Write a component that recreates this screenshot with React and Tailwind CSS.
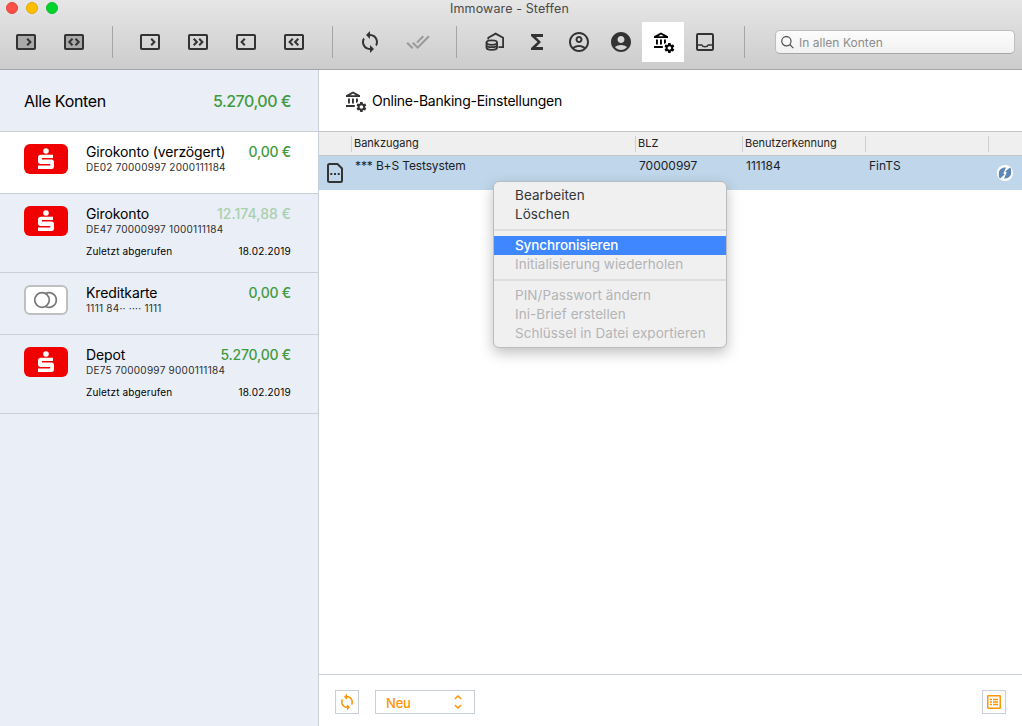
import React from 'react';
import { MdLoop, MdDoneAll, MdFunctions, MdOutlineAccountCircle, MdAccountCircle } from 'react-icons/md';

const accounts = [
  { name: 'Girokonto (verzögert)', number: 'DE02 70000997 2000111184', amount: '0,00 €', logo: 'sparkasse', active: true },
  { name: 'Girokonto', number: 'DE47 70000997 1000111184', amount: '12.174,88 €', logo: 'sparkasse', faded: true, date: '18.02.2019' },
  { name: 'Kreditkarte', number: '1111 84·· ···· 1111', amount: '0,00 €', logo: 'card' },
  { name: 'Depot', number: 'DE75 70000997 9000111184', amount: '5.270,00 €', logo: 'sparkasse', date: '18.02.2019' },
];

const menuGroups = [
  [{ label: 'Bearbeiten' }, { label: 'Löschen' }],
  [{ label: 'Synchronisieren', selected: true }, { label: 'Initialisierung wiederholen', disabled: true }],
  [
    { label: 'PIN/Passwort ändern', disabled: true },
    { label: 'Ini-Brief erstellen', disabled: true },
    { label: 'Schlüssel in Datei exportieren', disabled: true },
  ],
];

const chevrons = {
  right: 'M11.2 4.8L14.4 8l-3.2 3.2',
  both: 'M8.5 4.8L5.3 8l3.2 3.2M11.5 4.8L14.7 8l-3.2 3.2',
  doubleRight: 'M5.7 4.8L8.9 8l-3.2 3.2M11.2 4.8L14.4 8l-3.2 3.2',
  left: 'M8.8 4.8L5.6 8l3.2 3.2',
  doubleLeft: 'M8.8 4.8L5.6 8l3.2 3.2M14.3 4.8L11.1 8l3.2 3.2',
};

const BoxIcon = ({ d, fill = 'none' }) => (
  <svg width="20" height="16" viewBox="0 0 20 16" stroke="#333" strokeWidth="2">
    <rect x="1" y="1" width="18" height="14" rx="0.8" fill={fill} />
    <path d={d} fill="none" strokeWidth="2" />
  </svg>
);

const BankIcon = ({ color }) => (
  <svg width="22" height="22" viewBox="0 0 22 22" fill={color}>
    <path fillRule="evenodd" d="M8 0.5l7 3.8v1.7H1V4.3zM5.2 4.2h5.6L8 2.6z" />
    <path d="M3 7.5h1.9v5H3zM7 7.5h1.9v5H7zM11 7.5h1.9v3.6l-1.9 1zM1 14h8.8v1.9H1z" />
    <path transform="translate(10.4 9.9) scale(.5)" d="M19.43 12.98c.04-.32.07-.64.07-.98s-.03-.66-.07-.98l2.11-1.65c.19-.15.24-.42.12-.64l-2-3.46c-.12-.22-.39-.3-.61-.22l-2.49 1c-.52-.4-1.08-.73-1.69-.98l-.38-2.65C14.46 2.18 14.25 2 14 2h-4c-.25 0-.46.18-.49.42l-.38 2.65c-.61.25-1.17.59-1.69.98l-2.49-1c-.23-.09-.49 0-.61.22l-2 3.46c-.13.22-.07.49.12.64l2.11 1.65c-.04.32-.07.65-.07.98s.03.66.07.98l-2.11 1.65c-.19.15-.24.42-.12.64l2 3.46c.12.22.39.3.61.22l2.49-1c.52.4 1.08.73 1.69.98l.38 2.65c.03.24.24.42.49.42h4c.25 0 .46-.18.49-.42l.38-2.65c.61-.25 1.17-.59 1.69-.98l2.49 1c.23.09.49 0 .61-.22l2-3.46c.12-.22.07-.49-.12-.64l-2.11-1.65zM12 15.5c-1.93 0-3.5-1.57-3.5-3.5s1.57-3.5 3.5-3.5 3.5 1.57 3.5 3.5-1.57 3.5-3.5 3.5z" />
  </svg>
);

const AssetsIcon = () => (
  <svg width="20" height="20" viewBox="0 0 20 20" fill="none" stroke="#333" strokeWidth="1.8">
    <path d="M3.3 7.5V5.8L10.6 1.6l7.5 4.2V15.2h-4.6" />
    <ellipse cx="6.8" cy="10.6" rx="5.3" ry="2.3" />
    <path d="M1.5 10.6v5c0 1.4 2.3 2.3 5.3 2.3s5.3-.9 5.3-2.3v-5M1.5 13c0 1.3 2.3 2.2 5.3 2.2s5.3-.9 5.3-2.2" />
  </svg>
);

const InboxIcon = () => (
  <svg width="18" height="18" viewBox="0 0 18 18" fill="none" stroke="#333" strokeWidth="2">
    <rect x="1" y="1" width="16" height="16" rx="1.2" />
    <path d="M1 12h4.8c.5 1.3 1.7 1.8 3.2 1.8s2.7-.5 3.200-1.800H17" strokeWidth="1.5" />
  </svg>
);

const SparkasseLogo = () => (
  <svg width="44" height="30" viewBox="0 0 44 30">
    <rect width="44" height="30" rx="6" fill="#f00000" />
    <circle cx="22" cy="7" r="2.8" fill="#fff" />
    <path fill="#fff" d="M17 10.8h12V14H18v1.4h9.5c1.6 0 2.5.9 2.5 2.4v4.7c0 1.7-1 2.5-2.5 2.5H14v-3.6h12.2v-1.5h-9.7c-1.6 0-2.5-.9-2.5-2.3v-4.1c0-1.7 1.2-2.7 3-2.7z" />
  </svg>
);

const CardLogo = () => (
  <svg width="44" height="30" viewBox="0 0 44 30" fill="none">
    <rect x="1" y="1" width="42" height="28" rx="5" fill="#fff" stroke="#bfbfbf" strokeWidth="2" />
    <g stroke="#777" strokeWidth="1.7">
      <circle cx="18" cy="15" r="7.3" />
      <path d="M21.5 8.6a7.3 7.3 0 1 1 0 12.8" />
    </g>
  </svg>
);

const SyncBadge = () => (
  <svg width="16" height="16" viewBox="0 0 16 16">
    <circle cx="8" cy="8" r="8" fill="#fff" />
    <g fill="#5d87b5">
      <path d="M1.8 8.5C1.8 4.8 4.500 2.300 9 2.500L6.300 8.500 7.800 9.500 3 13.500 2 12z" />
      <path d="M14.200 7.500C14.200 11.200 11.500 13.700 7 13.500L9.700 7.500 8.200 6.500 13 2.500 14 4z" />
    </g>
  </svg>
);

const Slot = ({ children, wide }) => (
  <div className={`flex h-10 items-center justify-center ${wide ? 'w-12' : 'w-[42px]'}`}>{children}</div>
);

const Divider = () => <div className="h-8 w-px bg-[#a5a5a5]" />;

const Toolbar = () => (
  <header className="h-[70px] shrink-0 border-b border-[#a4a7aa] bg-gradient-to-b from-[#e5e6e5] to-[#cbcccb]">
    <div className="flex h-4 items-center">
      <div className="flex w-[58px] shrink-0 gap-2 pl-1.5">
        <span className="size-3 shrink-0 rounded-full border border-[#e2453f] bg-[#ff4f49]" />
        <span className="size-3 shrink-0 rounded-full border border-[#e3a60c] bg-[#ffbf00]" />
        <span className="size-3 shrink-0 rounded-full border border-[#0ebb28] bg-[#00d42d]" />
      </div>
      <h1 className="flex-1 pt-0.5 pr-[61px] text-center text-[12.5px] leading-4 tracking-[0.12px] text-[#4a4a4a]">Immoware - Steffen</h1>
    </div>
    <div className="mt-1.5 flex items-center pl-0.5">
      <Slot wide><BoxIcon d={chevrons.right} fill="#a9a9a9" /></Slot>
      <Slot wide><BoxIcon d={chevrons.both} fill="#a9a9a9" /></Slot>
      <div className="flex w-7 justify-center"><Divider /></div>
      <Slot wide><BoxIcon d={chevrons.right} /></Slot>
      <Slot wide><BoxIcon d={chevrons.doubleRight} /></Slot>
      <Slot wide><BoxIcon d={chevrons.left} /></Slot>
      <Slot wide><BoxIcon d={chevrons.doubleLeft} /></Slot>
      <div className="flex w-7 justify-center"><Divider /></div>
      <Slot wide><MdLoop size={24} color="#333" /></Slot>
      <Slot wide><MdDoneAll size={24} color="#999" /></Slot>
      <div className="flex w-8 pl-3.5"><Divider /></div>
      <Slot><AssetsIcon /></Slot>
      <Slot><MdFunctions size={24} color="#333" /></Slot>
      <Slot><MdOutlineAccountCircle size={24} color="#333" /></Slot>
      <Slot><MdAccountCircle size={24} color="#333" /></Slot>
      <div className="flex h-10 w-[42px] items-center justify-center bg-white pt-0.5 pl-0.5"><BankIcon color="#000" /></div>
      <Slot><InboxIcon /></Slot>
      <div className="flex w-[49px] pl-[18px]"><Divider /></div>
      <div className="flex h-6 w-60 items-center rounded-[5px] border border-[#bcbdbc] border-b-[#a5a6a5] bg-gradient-to-b from-[#fcfcfc] to-[#f1f1f1] pl-[5px]">
        <svg width="13" height="13" viewBox="0 0 14 14" fill="none" stroke="#505050" strokeWidth="1.3">
          <circle cx="5.8" cy="5.6" r="5" />
          <path d="M9.4 9.2l3.9 3.9" />
        </svg>
        <span className="ml-[5px] pt-px text-[12px] tracking-[0.02px] text-[#8c8c8c]">In allen Konten</span>
      </div>
    </div>
  </header>
);

const AccountRow = ({ account }) => (
  <div className={`flex border-b border-[#c9d0db] pt-3 pr-[27px] pl-6 ${account.date ? 'h-[79px]' : 'h-[62px]'} ${account.active ? 'bg-white' : ''}`}>
    {account.logo === 'card' ? <CardLogo /> : <SparkasseLogo />}
    <div className="ml-[18px] flex-1 text-black">
      <div className="flex justify-between text-[14px] leading-4 whitespace-nowrap">
        <span className="tracking-[-0.13px]">{account.name}</span>
        <span className={`font-medium ${account.faded ? 'tracking-[0.02px] text-[#a9d0ad]' : 'tracking-[-0.22px] text-[#409b3f]'}`}>{account.amount}</span>
      </div>
      <div className="text-[10px] leading-[14px] tracking-[0.25px] whitespace-nowrap text-[#2e2e2e]">{account.number}</div>
      {account.date && (
        <div className="mt-2 flex justify-between text-[10px] leading-[14px]">
          <span className="tracking-[0.15px]">Zuletzt abgerufen</span>
          <span className="tracking-[0.2px]">{account.date}</span>
        </div>
      )}
    </div>
  </div>
);

const Sidebar = () => (
  <aside className="w-[319px] shrink-0 border-r border-[#c9cfda] bg-[#eaeef6]">
    <div className="flex h-[62px] items-center justify-between border-b border-[#c9d0db] pr-[27px] pl-6 text-[16px]">
      <span className="tracking-[-0.35px] text-black">Alle Konten</span>
      <span className="font-medium tracking-[-0.5px] text-[#409b3f]">5.270,00 €</span>
    </div>
    {accounts.map(account => <AccountRow key={account.number} account={account} />)}
  </aside>
);

const HeaderCell = ({ className, children }) => (
  <div className={`h-4 border-l border-[#cfcfcf] pl-0.5 ${className}`}>{children}</div>
);

const ContextMenu = () => (
  <div className="absolute top-[181px] left-[493px] w-[234px] rounded-md border border-[#b9bcc0] bg-[#f0f0f1] pt-1 pb-1 shadow-[0_5px_14px_rgba(0,0,0,0.25)]">
    {menuGroups.map((group, index) => (
      <div key={index}>
        {index > 0 && <div className="my-[5px] h-0.5 bg-[#dedede]" />}
        {group.map(item => (
          <div
            key={item.label}
            className={`h-[19px] pl-[21px] text-[13.5px] leading-[19px] whitespace-nowrap ${item.selected ? 'bg-[#3f87ff] font-medium tracking-[-0.1px] text-white' : item.disabled ? 'tracking-[0.05px] text-[#b4b4b5]' : 'tracking-[0.05px] text-[#363636]'}`}
          >
            {item.label}
          </div>
        ))}
      </div>
    ))}
  </div>
);

const App = () => (
  <div className="relative flex h-[726px] w-[1022px] flex-col overflow-hidden bg-white font-['Inter',sans-serif]">
    <Toolbar />
    <div className="flex flex-1">
      <Sidebar />
      <main className="flex flex-1 flex-col">
        <div className="flex h-[62px] items-center border-b border-[#c4c4c4] pl-[26px]">
          <div className="pt-[3px]"><BankIcon color="#333" /></div>
          <h2 className="ml-[5px] text-[14px] tracking-[-0.24px] text-black">Online-Banking-Einstellungen</h2>
        </div>

        {/* Table */}
        <div className="flex h-6 items-center border-b border-[#c3c4c6] bg-[#efefef] pl-8 text-[11px] leading-[15px] text-[#222]">
          <HeaderCell className="w-[284px]">Bankzugang</HeaderCell>
          <HeaderCell className="w-[107px]">BLZ</HeaderCell>
          <HeaderCell className="w-[123px]">Benutzerkennung</HeaderCell>
          <HeaderCell className="w-[123px]" />
          <HeaderCell className="flex-1" />
        </div>
        <div className="flex h-[34px] bg-[#c0d7eb] text-[12px] leading-5 text-[#1d2125]">
          <div className="w-9 pt-[7px] pl-2">
            <svg width="16" height="20" viewBox="0 0 16 20" fill="none" stroke="#333" strokeWidth="2">
              <path d="M2.5 1H10.5L15 5.5V17.5a1.5 1.5 0 0 1-1.5 1.5h-11A1.5 1.5 0 0 1 1 17.5v-15A1.5 1.5 0 0 1 2.5 1z" />
              <path d="M3.3 11h2M7 11h2M10.7 11h2" />
            </svg>
          </div>
          <div className="w-[284px] tracking-[-0.13px]">*** B+S Testsystem</div>
          <div className="w-[107px]">70000997</div>
          <div className="w-[123px]">111184</div>
          <div className="flex-1">FinTS</div>
          <div className="pt-[9px] pr-[9px]"><SyncBadge /></div>
        </div>

        {/* Footer */}
        <div className="mt-auto flex h-[52px] shrink-0 border-t border-[#c9cfd8] px-4 pt-[15px] text-[#ff9500]">
          <button className="flex size-6 items-center justify-center border border-[#c9cfd8]"><MdLoop size={18} className="shrink-0" /></button>
          <button className="ml-4 flex h-6 w-[100px] items-center justify-between border border-[#c9cfd8] pr-3 pl-2.5 text-[13px] font-medium">
            <span className="pt-1 tracking-[-0.2px]">Neu</span>
            <svg width="8" height="14" viewBox="0 0 8 14" fill="none" stroke="currentColor" strokeWidth="1.5">
              <path d="M.8 4L4 1l3.2 3M.8 10L4 13l3.2-3" />
            </svg>
          </button>
          <button className="ml-auto flex size-6 items-center justify-center border border-[#c9cfd8]">
            <svg width="14" height="14" viewBox="0 0 14 14" fill="none" stroke="currentColor">
              <rect x=".75" y=".75" width="12.5" height="12.5" rx=".5" strokeWidth="1.5" />
              <path d="M3 4.5h2M6 4.5h5M3 7h2M6 7h5M3 9.5h2M6 9.5h5" strokeWidth="1.3" />
            </svg>
          </button>
        </div>
      </main>
    </div>
    <ContextMenu />
  </div>
);

export default App;
